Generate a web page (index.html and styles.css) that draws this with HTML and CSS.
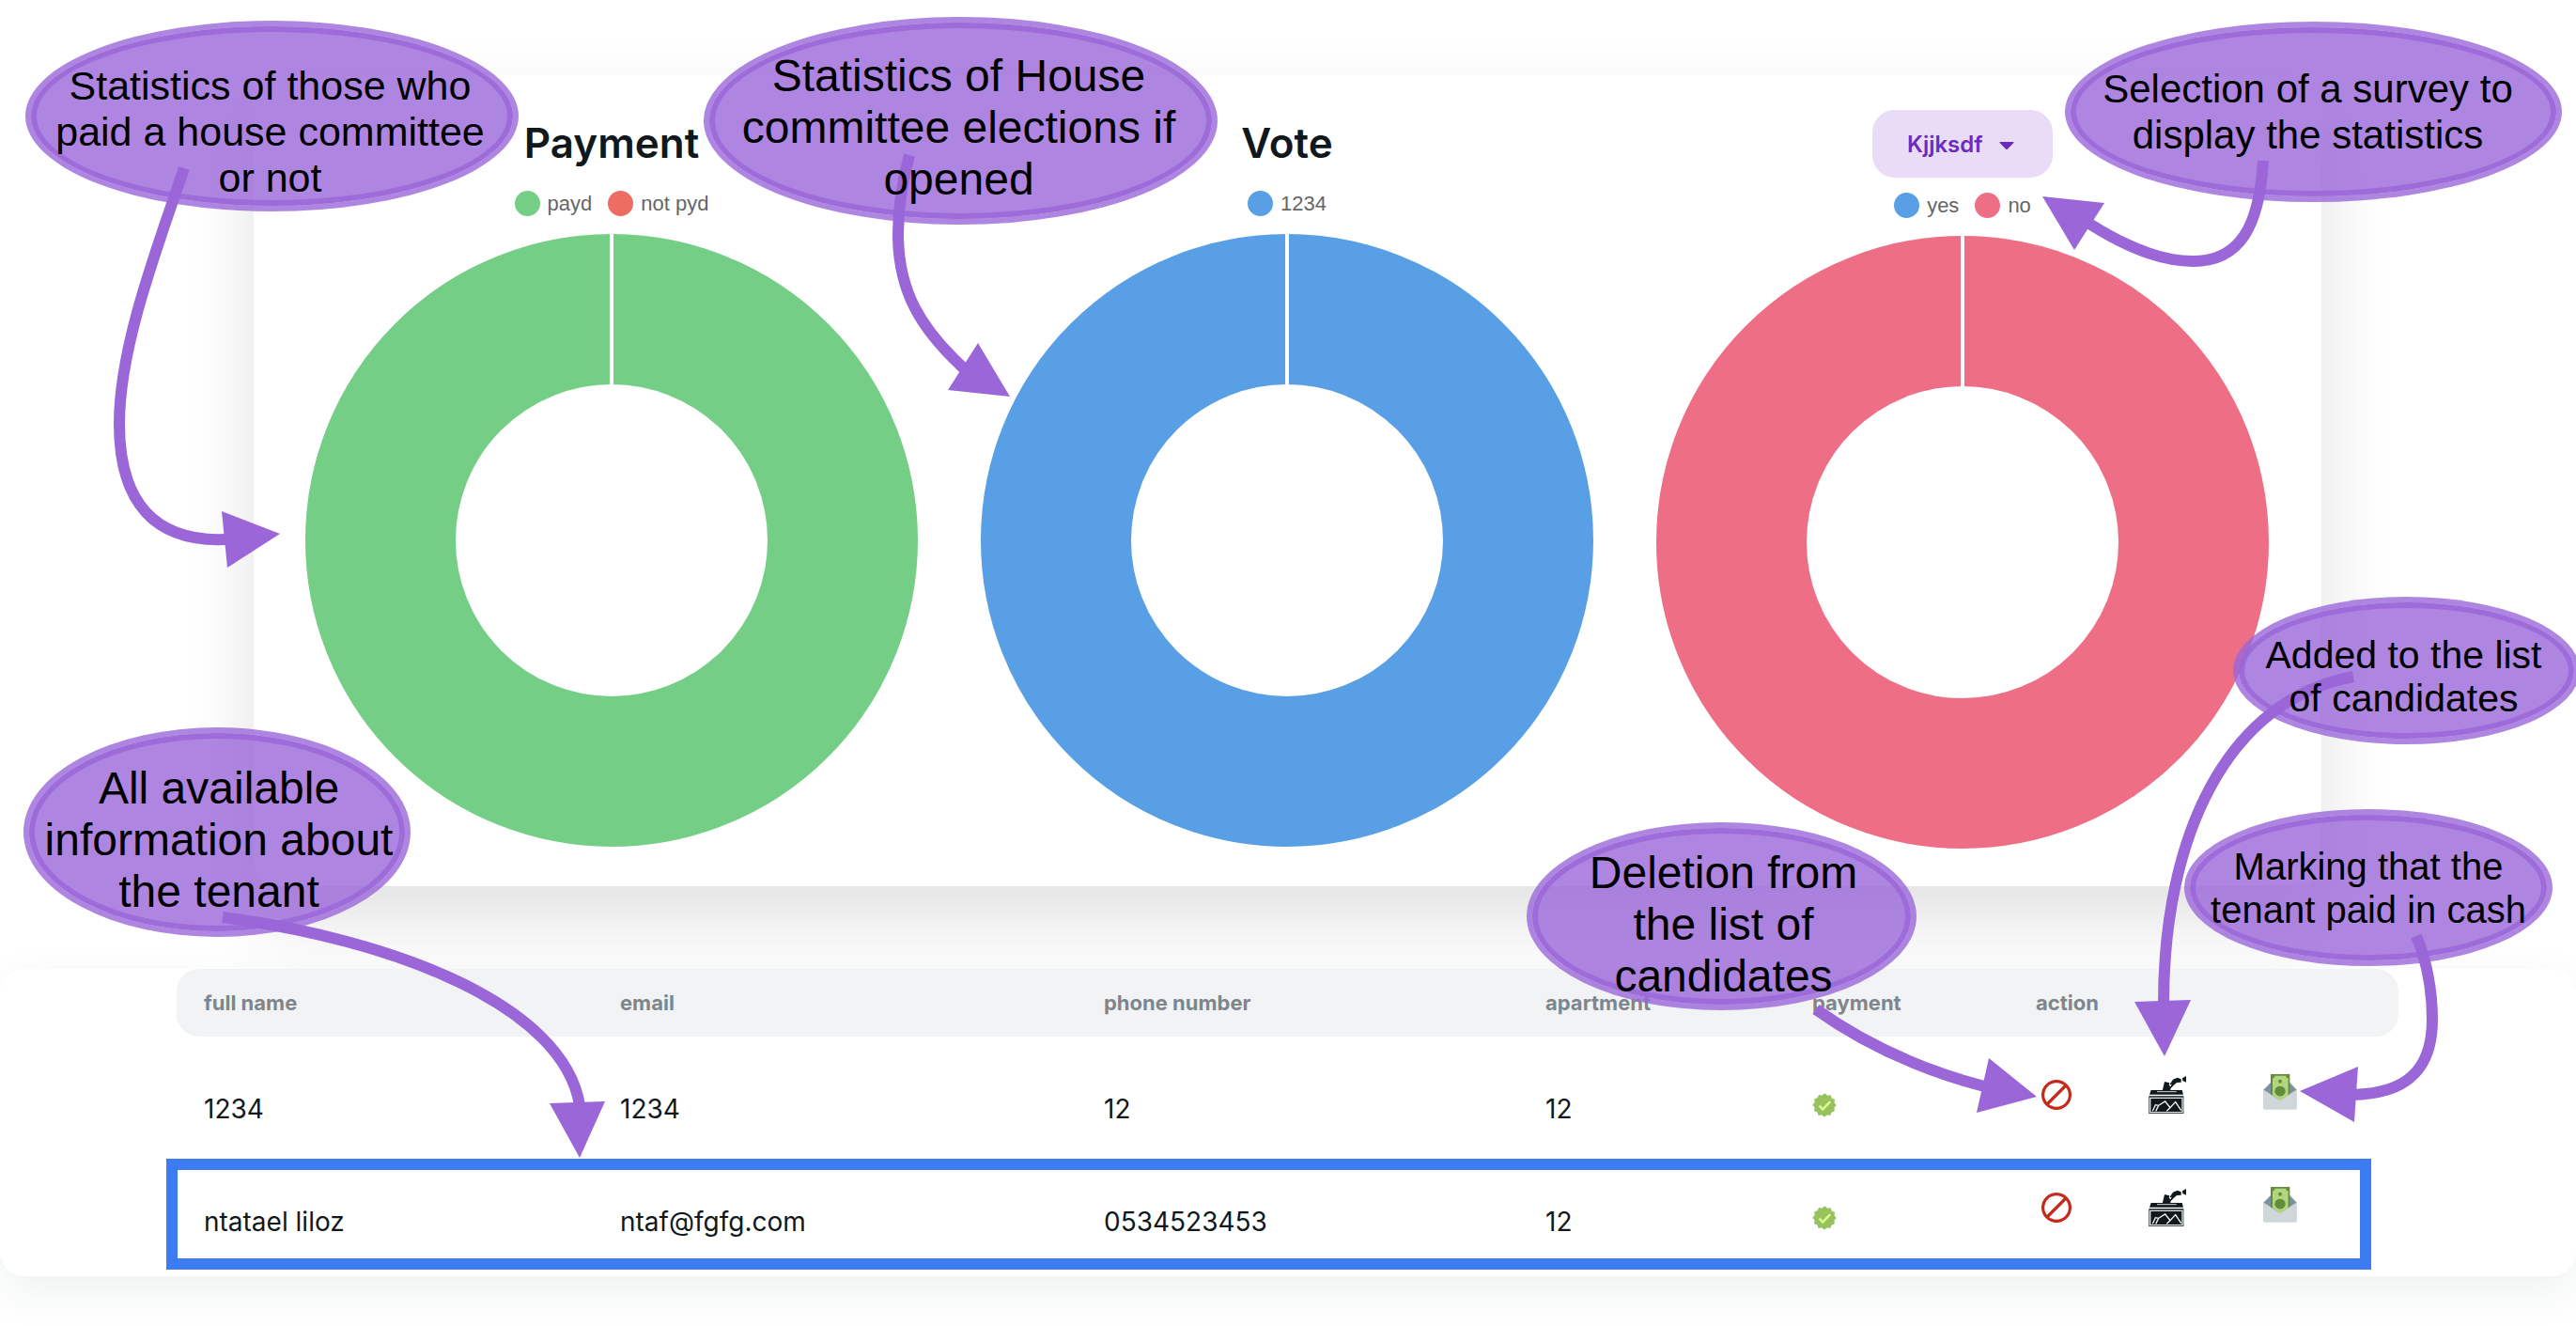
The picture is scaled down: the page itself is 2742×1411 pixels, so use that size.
FILE: index.html
```
<!DOCTYPE html>
<html lang="en">
<head>
<meta charset="utf-8">
<title>House committee dashboard</title>
<link rel="stylesheet" href="styles.css">
</head>
<body>
<svg class="defs" width="0" height="0" aria-hidden="true">
  <symbol id="verified" viewBox="0 0 26 26">
    <circle cx="13" cy="13" r="11" fill="#97c25d"/>
    <circle cx="13" cy="13" r="10.7" fill="none" stroke="#97c25d" stroke-width="3.4" stroke-linecap="round" stroke-dasharray="0 5.6025"/>
    <path d="M7.6 13.6l3.6 3.8 8-8.2" fill="none" stroke="#d8ff8f" stroke-width="2.4"/>
  </symbol>
  <symbol id="ban" viewBox="0 0 32 32">
    <circle cx="16" cy="16" r="14.4" fill="none" stroke="#c6291b" stroke-width="3.2"/>
    <path d="M26 6L6 26" stroke="#c6291b" stroke-width="3.2"/>
  </symbol>
  <symbol id="ballot" viewBox="24 20 129 132">
    <path d="M78 44l16 4-2 8 7 4-3 14H71z" fill="#11181c"/>
    <path d="M94 54l11-17 14-6 12 5v10l-14 1-10 9-8 8-3-2 5-10z" fill="#11181c"/>
    <path d="M135 33l12-7v20l-11-5z" fill="#11181c"/>
    <path d="M35 71h99l4 14H30z" fill="#11181c"/>
    <path d="M54 76h62" stroke="#d5d7d8" stroke-width="3"/>
    <path d="M28 90h111v56H28z" fill="#11181c"/>
    <path d="M32 96h103v46H32z" fill="none" stroke="#e6e7e8" stroke-width="4"/>
    <path d="M40 138l9-20 10 2 21-13 16 20 17-18 18 27M50 138l9-18m26 18l11-11" fill="none" stroke="#f1f2f2" stroke-width="4"/>
  </symbol>
  <symbol id="cash" viewBox="36 37 114 132">
    <path d="M39 88l24-24h61l23 24v24H39z" fill="#7e919e"/>
    <path d="M63 36h61v72l-30 18-31-18z" fill="#628d3d"/>
    <path d="M76 42h36q0 8 7 8v54l-26 18-24-18V50q7 0 7-8z" fill="#b3d580"/>
    <circle cx="93" cy="60" r="6" fill="#628d3d"/>
    <circle cx="93" cy="92" r="17" fill="#628d3d"/>
    <path d="M39 86l54 35 54-35v59q0 5-5 5H44q-5 0-5-5z" fill="#d0d7db"/>
    <path d="M69 103l24 17 26-17-12-2a17 17 0 0 1-28 0z" fill="#b3d580"/>
  </symbol>
</svg>

<main class="page">
  <section class="charts">
    <article class="chart">
      <header class="chart-head"><h2>Payment</h2></header>
      <ul class="legend">
        <li class="green">payd</li>
        <li class="red">not pyd</li>
      </ul>
      <svg class="donut green" viewBox="0 0 654 654" role="img" aria-label="Payment chart">
        <circle cx="327" cy="327" r="246"/><path d="M327 0v162"/>
      </svg>
    </article>
    <article class="chart">
      <header class="chart-head"><h2>Vote</h2></header>
      <ul class="legend">
        <li class="blue">1234</li>
      </ul>
      <svg class="donut blue" viewBox="0 0 654 654" role="img" aria-label="Vote chart">
        <circle cx="327" cy="327" r="246"/><path d="M327 0v162"/>
      </svg>
    </article>
    <article class="chart">
      <header class="chart-head with-picker">
        <div class="picker">
          <select aria-label="Survey"><option>Kjjksdf</option></select>
          <svg viewBox="0 0 16 8" aria-hidden="true"><path d="M1 0h14q1 0 .4 1L9 7.400q-1 1-2 0L.6 1Q0 0 1 0z"/></svg>
        </div>
      </header>
      <ul class="legend">
        <li class="blue">yes</li>
        <li class="pink">no</li>
      </ul>
      <svg class="donut pink" viewBox="0 0 654 654" role="img" aria-label="Survey chart">
        <circle cx="327" cy="327" r="246"/><path d="M327 0v162"/>
      </svg>
    </article>
  </section>

  <section class="tenants">
    <table>
      <colgroup><col class="c-name"><col class="c-email"><col class="c-phone"><col class="c-apt"><col class="c-pay"><col></colgroup>
      <thead>
        <tr><th>full name</th><th>email</th><th>phone number</th><th>apartment</th><th>payment</th><th>action</th></tr>
      </thead>
      <tbody>
        <tr>
          <td>1234</td><td>1234</td><td>12</td><td>12</td>
          <td><svg class="verified" role="img" aria-label="paid"><use href="#verified"/></svg></td>
          <td><div class="actions">
            <button type="button" aria-label="Remove candidate"><svg class="small"><use href="#ban"/></svg></button>
            <button type="button" aria-label="Add candidate"><svg><use href="#ballot"/></svg></button>
            <button type="button" aria-label="Paid in cash"><svg class="cash"><use href="#cash"/></svg></button>
          </div></td>
        </tr>
        <tr>
          <td>ntatael liloz</td><td>ntaf@fgfg.com</td><td>0534523453</td><td>12</td>
          <td><svg class="verified" role="img" aria-label="paid"><use href="#verified"/></svg></td>
          <td><div class="actions">
            <button type="button" aria-label="Remove candidate"><svg class="small"><use href="#ban"/></svg></button>
            <button type="button" aria-label="Add candidate"><svg><use href="#ballot"/></svg></button>
            <button type="button" aria-label="Paid in cash"><svg class="cash"><use href="#cash"/></svg></button>
          </div></td>
        </tr>
      </tbody>
    </table>
  </section>

  <div class="notes">
    <div class="row-frame"></div>
    <svg class="arrows" viewBox="0 0 2742 1411" aria-hidden="true">
      <g class="lines">
        <path d="M196 179C165 270 127 370 127 451C127 535 165 577 240 574"/>
        <path d="M968 165C960 195 956 220 956 249C956 310 980 350 1027 393"/>
        <path d="M2409 171C2405 240 2385 278 2334 278C2300 278 2262 262 2224 238"/>
        <path d="M237 976C420 1000 600 1070 617 1176"/>
        <path d="M1933 1074Q2010 1129 2112 1156"/>
        <path d="M2505 720C2370 745 2303 890 2303 1068"/>
        <path d="M2572 996C2583 1022 2589 1055 2589 1085C2589 1140 2560 1164 2504 1165"/>
      </g>
      <path d="M236 544L298 568L242 604z"/>
      <path d="M1041 365L1075 422L1009 415z"/>
      <path d="M2174 209L2240 216L2208 266z"/>
      <path d="M585 1174L644 1172L617 1232z"/>
      <path d="M2117 1126L2168 1167L2104 1184z"/>
      <path d="M2272 1066L2332 1064L2304 1124z"/>
      <path d="M2510 1135L2448 1161L2506 1194z"/>
    </svg>
    <p class="note n-payment">Statistics of those who<br>paid a house committee<br>or not</p>
    <p class="note large n-vote">Statistics of House<br>committee elections if<br>opened</p>
    <p class="note n-survey">Selection of a survey to<br>display the statistics</p>
    <p class="note large n-tenant">All available<br>information about<br>the tenant</p>
    <p class="note large n-delete">Deletion from<br>the list of<br>candidates</p>
    <p class="note small n-add">Added to the list<br>of candidates</p>
    <p class="note small n-cash">Marking that the<br>tenant paid in cash</p>
  </div>
</main>
</body>
</html>
```
FILE: styles.css
```
* { box-sizing: border-box; }

body {
  margin: 0;
  background: #fff;
  color: #11181c;
  font-family: Inter, "Noto Sans", sans-serif;
}

.defs { position: absolute; }

.page {
  position: relative;
  padding: 80px 0 53px;
  overflow: hidden;
}

/* Charts card */
.charts {
  display: grid;
  grid-template-columns: repeat(3, 1fr);
  gap: 65px;
  margin: 0 271px 88px 270px;
  padding: 36px 55px 39px 54px;
  background: #fff;
  border-radius: 24px;
  box-shadow: 0 36px 80px rgba(0, 0, 0, 0.12);
}

.chart {
  display: flex;
  flex-direction: column;
  align-items: center;
}

.chart-head {
  display: flex;
  align-items: center;
  height: 72px;
  margin-bottom: 15px;
}

.with-picker { height: 74px; }

h2 {
  margin: 0;
  font-size: 44px;
  font-weight: 600;
  line-height: 60px;
}

.picker { position: relative; }

.picker select {
  width: 192px;
  height: 72px;
  padding: 0 37px;
  border: 0;
  border-radius: 24px;
  background: #e9dcf6;
  color: #6b2bbf;
  font: 600 24px Inter, sans-serif;
  appearance: none;
}

.picker svg {
  position: absolute;
  top: 34px;
  right: 41px;
  width: 16px;
  height: 8px;
  fill: #6b2bbf;
  pointer-events: none;
}

.legend {
  display: flex;
  gap: 17px;
  height: 27px;
  margin: 0 0 18px;
  padding: 0;
  list-style: none;
  color: #666;
  font: 22px/27px "Liberation Sans", Arial, sans-serif;
}

.legend li {
  display: flex;
  gap: 8px;
}

.legend li::before {
  content: "";
  width: 27px;
  height: 27px;
  border-radius: 50%;
  background: var(--tone);
}

.green { --tone: #74ce86; }
.red { --tone: #ed6d62; }
.blue { --tone: #589fe5; }
.pink { --tone: #ee6e86; }

.donut {
  display: block;
  width: 100%;
  fill: none;
}

.donut circle {
  stroke: var(--tone);
  stroke-width: 160;
}

.donut path {
  stroke: #fff;
  stroke-width: 4;
}

/* Tenants table */
.tenants {
  position: relative;
  padding: 0 189px 0 188px;
  background: #fff;
  border-radius: 26px;
  box-shadow: 0 16px 50px rgba(20, 50, 50, 0.07);
}

table {
  width: 100%;
  table-layout: fixed;
  border-spacing: 0;
}

.c-name { width: 443px; }
.c-email { width: 515px; }
.c-phone { width: 470px; }
.c-apt { width: 284px; }
.c-pay { width: 238px; }

th {
  height: 72px;
  padding: 0 0 0 29px;
  background: #f1f3f5;
  color: #7e868b;
  font-size: 22px;
  font-weight: 700;
  text-align: left;
}

th:first-child { border-radius: 24px 0 0 24px; }
th:last-child { border-radius: 0 24px 24px 0; }

tbody::before {
  content: "";
  display: block;
  height: 15px;
}

td {
  height: 120px;
  padding: 4px 0 0 29px;
  font-size: 28px;
}

.verified {
  display: block;
  width: 26px;
  height: 26px;
  margin-bottom: 8px;
}

.actions {
  display: flex;
  gap: 76px;
  padding-bottom: 30px;
}

.actions button {
  display: flex;
  align-items: center;
  justify-content: center;
  width: 43px;
  height: 44px;
  padding: 0;
  border: 0;
  background: none;
}

.actions svg {
  width: 43px;
  height: 44px;
}

.actions .small {
  width: 32px;
  height: 32px;
}

.actions .cash { width: 38px; }

#cash { overflow: visible; }

/* Explanatory overlay */
.notes {
  position: absolute;
  inset: 0;
  overflow: hidden;
  pointer-events: none;
}

.row-frame {
  position: absolute;
  top: 1233px;
  left: 177px;
  right: 218px;
  height: 118px;
  border: 12px solid #3b7cf3;
}

.arrows {
  position: absolute;
  inset: 0;
  width: 100%;
  fill: #9a66d8;
}

.lines {
  fill: none;
  stroke: #9a66d8;
  stroke-width: 12;
}

.note {
  position: absolute;
  display: flex;
  align-items: center;
  justify-content: center;
  margin: 0;
  border: 6px solid rgba(154, 102, 216, 0.8);
  border-radius: 50%;
  background: rgba(154, 102, 216, 0.8);
  background-clip: padding-box;
  box-shadow: inset 0 0 0 6px rgba(154, 102, 216, 0.8);
  color: #000;
  font: 43px/49px "Liberation Sans", Arial, sans-serif;
  text-align: center;
  white-space: nowrap;
}

.large { font-size: 48px; line-height: 55px; }
.note.small { font-size: 41px; line-height: 46px; }

.n-payment { left: 27px; top: 22px; width: 525px; height: 203px; padding: 34px 4px 0 0; }
.n-vote { left: 749px; top: 18px; width: 547px; height: 221px; padding: 14px 4px 0 0; }
.n-survey { left: 2198px; top: 23px; width: 529px; height: 192px; padding-right: 12px; font-size: 42px; }
.n-tenant { left: 25px; top: 774px; width: 412px; height: 223px; padding: 16px 0 0 4px; }
.n-delete { left: 1625px; top: 875px; width: 415px; height: 200px; padding: 16px 0 0 4px; }
.n-add { left: 2377px; top: 635px; width: 369px; height: 157px; padding: 12px 6px 0 0; }
.n-cash { left: 2325px; top: 861px; width: 392px; height: 167px; }
.note.n-cash { font-size: 40px; }
```
